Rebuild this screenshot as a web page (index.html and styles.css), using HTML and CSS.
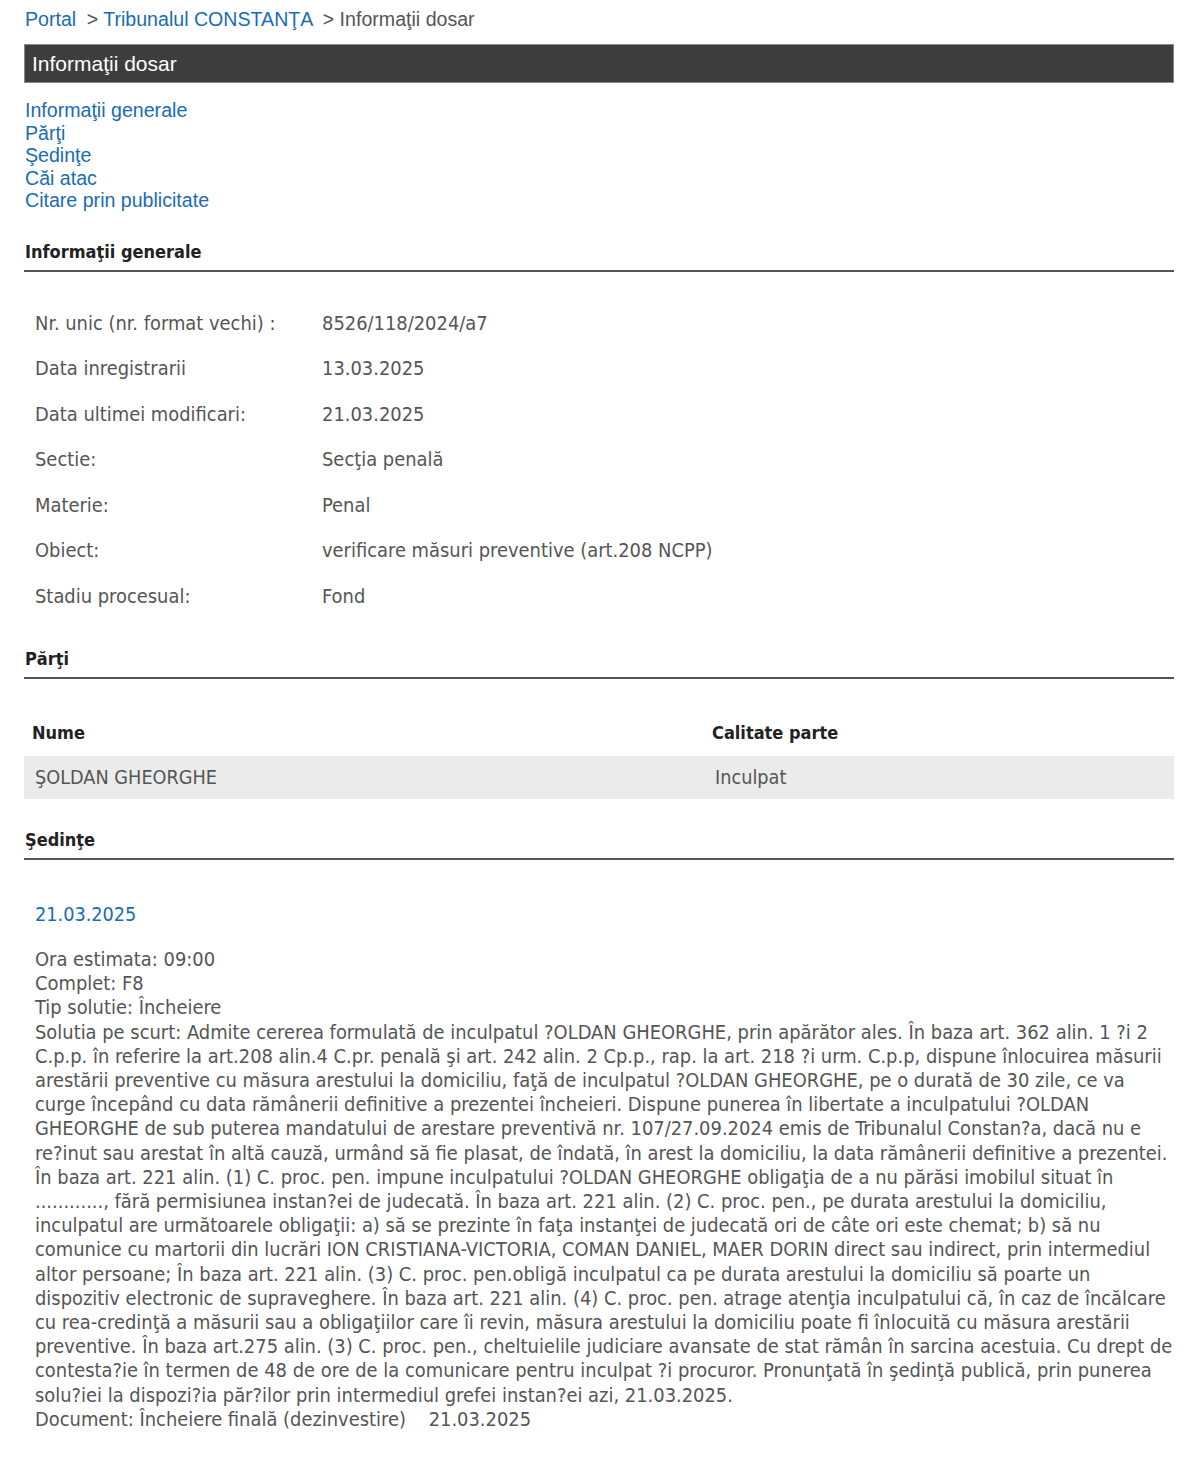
FILE: index.html
```html
<!DOCTYPE html>
<html>
	<head>
		<meta charset="UTF-8">
		<title>Informaţii dosar</title>
		<link rel="stylesheet" href="styles.css">
	</head>
	<body>
		<div id="page">

			<!--cale de navigare-->
			<div class="crumbs">
				<a href="javascript:;">Portal</a>
				<span class="sep">&gt;</span> <a href="javascript:;">Tribunalul CONSTANŢA</a>
				<span class="sep">&gt;</span> <span class="current">Informaţii dosar</span>
			</div>

			<h1 class="bar">Informaţii dosar</h1>

			<ul class="toc">
				<li><a href="#generale">Informaţii generale</a></li>
				<li><a href="#parti">Părţi</a></li>
				<li><a href="#sedinte">Şedinţe</a></li>
				<li><a href="javascript:;">Căi atac</a></li>
				<li><a href="javascript:;">Citare prin publicitate</a></li>
			</ul>

			<!--informatii generale-->
			<h2 class="section" id="generale">Informaţii generale</h2>
			<table class="info">
				<tr><td class="lbl">Nr. unic (nr. format vechi) :</td><td>8526/118/2024/a7</td></tr>
				<tr><td class="lbl">Data inregistrarii</td><td>13.03.2025</td></tr>
				<tr><td class="lbl">Data ultimei modificari:</td><td>21.03.2025</td></tr>
				<tr><td class="lbl">Sectie:</td><td>Secţia penală</td></tr>
				<tr><td class="lbl">Materie:</td><td>Penal</td></tr>
				<tr><td class="lbl">Obiect:</td><td>verificare măsuri preventive (art.208 NCPP)</td></tr>
				<tr><td class="lbl">Stadiu procesual:</td><td>Fond</td></tr>
			</table>

			<!--parti-->
			<h2 class="section" id="parti">Părţi</h2>
			<table class="parti">
				<tr><th class="nume">Nume</th><th>Calitate parte</th></tr>
				<tr class="alt"><td>ŞOLDAN GHEORGHE</td><td>Inculpat</td></tr>
			</table>

			<!--sedinte-->
			<h2 class="section" id="sedinte">Şedinţe</h2>
			<div class="sedinta">
				<div class="data">21.03.2025</div>
				<div class="detalii">
					Ora estimata: 09:00<br>
					Complet: F8<br>
					Tip solutie: Încheiere<br>
					Solutia pe scurt: Admite cererea formulată de inculpatul ?OLDAN GHEORGHE, prin apărător ales. În baza art. 362 alin. 1 ?i 2<br>
					C.p.p. în referire la art.208 alin.4 C.pr. penală şi art. 242 alin. 2 Cp.p., rap. la art. 218 ?i urm. C.p.p, dispune înlocuirea măsurii<br>
					arestării preventive cu măsura arestului la domiciliu, faţă de inculpatul ?OLDAN GHEORGHE, pe o durată de 30 zile, ce va<br>
					curge începând cu data rămânerii definitive a prezentei încheieri. Dispune punerea în libertate a inculpatului ?OLDAN<br>
					GHEORGHE de sub puterea mandatului de arestare preventivă nr. 107/27.09.2024 emis de Tribunalul Constan?a, dacă nu e<br>
					re?inut sau arestat în altă cauză, urmând să fie plasat, de îndată, în arest la domiciliu, la data rămânerii definitive a prezentei.<br>
					În baza art. 221 alin. (1) C. proc. pen. impune inculpatului ?OLDAN GHEORGHE obligaţia de a nu părăsi imobilul situat în<br>
					............, fără permisiunea instan?ei de judecată. În baza art. 221 alin. (2) C. proc. pen., pe durata arestului la domiciliu,<br>
					inculpatul are următoarele obligaţii: a) să se prezinte în faţa instanţei de judecată ori de câte ori este chemat; b) să nu<br>
					comunice cu martorii din lucrări ION CRISTIANA-VICTORIA, COMAN DANIEL, MAER DORIN direct sau indirect, prin intermediul<br>
					altor persoane; În baza art. 221 alin. (3) C. proc. pen.obligă inculpatul ca pe durata arestului la domiciliu să poarte un<br>
					dispozitiv electronic de supraveghere. În baza art. 221 alin. (4) C. proc. pen. atrage atenţia inculpatului că, în caz de încălcare<br>
					cu rea-credinţă a măsurii sau a obligaţiilor care îi revin, măsura arestului la domiciliu poate fi înlocuită cu măsura arestării<br>
					preventive. În baza art.275 alin. (3) C. proc. pen., cheltuielile judiciare avansate de stat rămân în sarcina acestuia. Cu drept de<br>
					contesta?ie în termen de 48 de ore de la comunicare pentru inculpat ?i procuror. Pronunţată în şedinţă publică, prin punerea<br>
					solu?iei la dispozi?ia păr?ilor prin intermediul grefei instan?ei azi, 21.03.2025.<br>
					Document: Încheiere finală (dezinvestire) &nbsp;&nbsp; 21.03.2025
				</div>
			</div>

		</div>
	</body>
</html>
```

FILE: styles.css
```css
*{
	margin: 0;
	padding: 0;
}

body{
	background-color: #fff;
	font-family: "DejaVu Sans Condensed", "DejaVu Sans", sans-serif;
	color: #555;
}

a{
	color: #1a6bb5;
	text-decoration: none;
}

#page{
	width: 1150px;
	padding: 7px 0 40px 24px;
}

/*cale de navigare*/
.crumbs{
	font-family: "Liberation Sans", Arial, sans-serif;
	font-size: 19.6px;
	line-height: 24px;
	padding-left: 1px;
	color: #555;
}

.crumbs .sep{
	margin-left: 5px;
}

/*bara titlu*/
.bar{
	margin-top: 13px;
	height: 37px;
	line-height: 37px;
	background-color: #3d3d3d;
	border: 1px solid #888;
	color: #fff;
	font-family: "Liberation Sans", Arial, sans-serif;
	font-size: 21px;
	font-weight: normal;
	padding-left: 7px;
}

.toc{
	list-style: none;
	margin-top: 16px;
	padding-left: 1px;
	font-family: "Liberation Sans", Arial, sans-serif;
	font-size: 19.6px;
	line-height: 22.5px;
}

/*titluri sectiuni*/
.section{
	font-size: 18px;
	font-weight: bold;
	color: #222;
	padding: 0 0 6px 1px;
	border-bottom: 2px solid #555;
	line-height: 24px;
}

#generale{
	margin-top: 28px;
}

.info{
	border-collapse: collapse;
	margin-top: 29px;
	font-size: 19.9px;
}

.info td{
	height: 45.5px;
	padding: 0 0 0 11px;
	vertical-align: middle;
}

.info td.lbl{
	width: 276px;
}

#parti{
	margin-top: 28px;
}

.parti{
	width: 100%;
	border-collapse: collapse;
	margin-top: 29px;
	font-size: 19.7px;
}

.parti th{
	text-align: left;
	font-size: 18px;
	color: #222;
	height: 48px;
	padding-left: 8px;
}

.parti th.nume{
	width: 672px;
}

.parti td{
	height: 43px;
	padding-left: 11px;
}

.parti tr.alt{
	background-color: #ebebeb;
}

#sedinte{
	margin-top: 29px;
}

.sedinta{
	padding-left: 11px;
}

.sedinta .data{
	margin-top: 43px;
	color: #1a6bb5;
	font-size: 19.7px;
	line-height: 24px;
}

.sedinta .detalii{
	margin-top: 21px;
	font-size: 19.9px;
	line-height: 24.2px;
	white-space: nowrap;
}
```
